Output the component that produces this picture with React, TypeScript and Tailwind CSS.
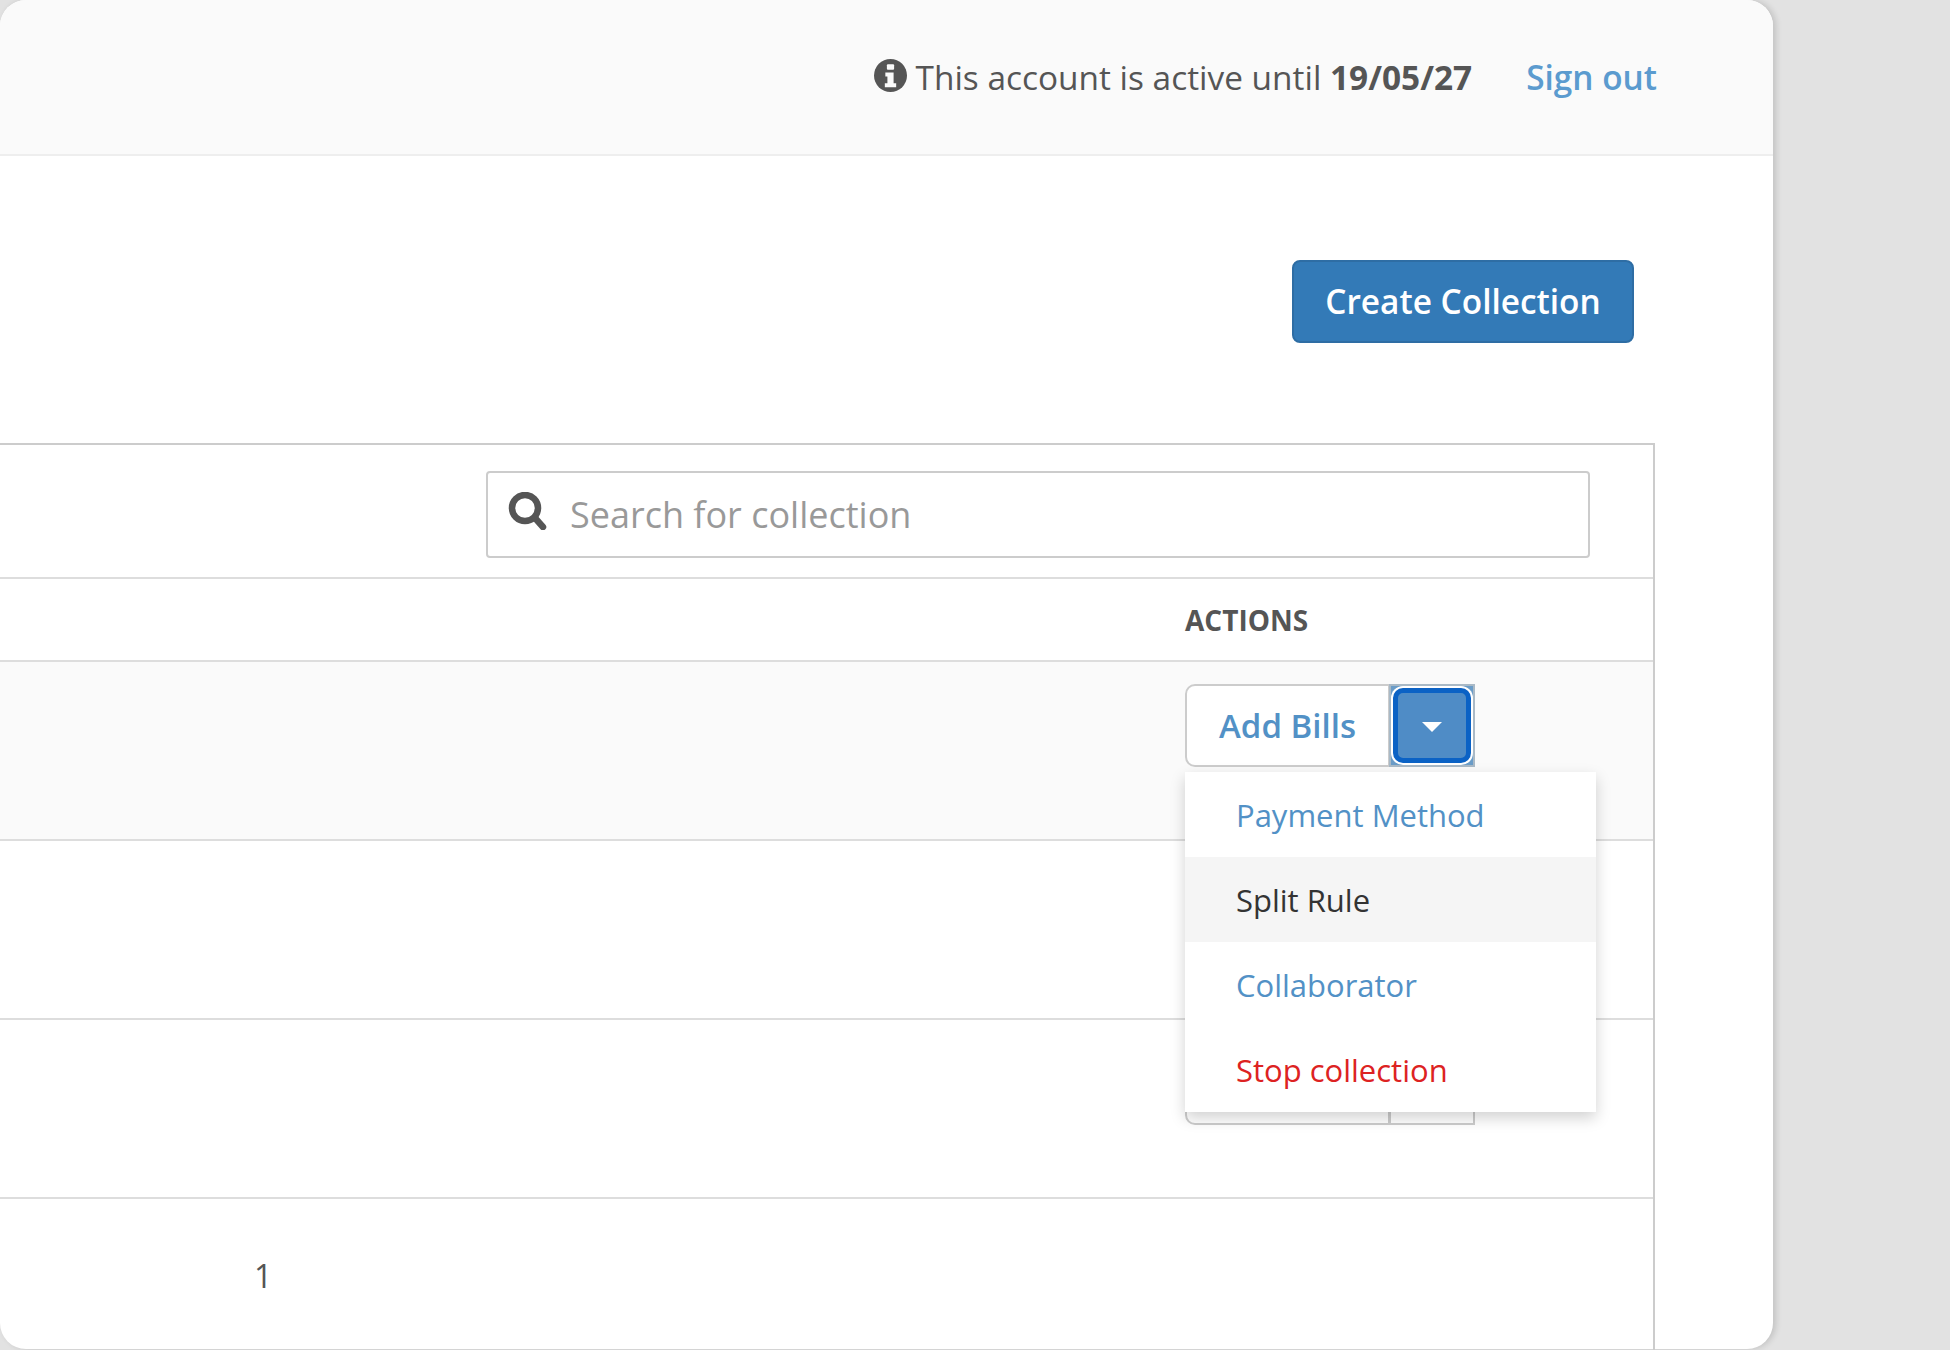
function Caret() {
  return (
    <svg width="20" height="10" viewBox="0 0 20 10" className="block mt-[3px]">
      <path d="M0 0H20L10 10Z" fill="#ffffff" />
    </svg>
  );
}

function InfoIcon() {
  return (
    <svg width="33" height="33" viewBox="0 0 32 32" className="block shrink-0 mr-[9px] -mt-[3px]">
      <circle cx="16" cy="16" r="16" fill="#555555" />
      <rect x="12.5" y="5" width="7" height="5.5" rx="1" fill="#fafafa" />
      <path d="M11 13H19V23.5H21.5V27.5H10.5V23.5H13V17H11Z" fill="#fafafa" />
    </svg>
  );
}

function SearchIcon() {
  return (
    <svg width="40" height="38" viewBox="0 0 40 38" className="block shrink-0 -mt-[7px]">
      <circle cx="17" cy="16" r="13" fill="none" stroke="#555555" strokeWidth="6.5" />
      <path d="M27 26L35 35" fill="none" stroke="#555555" strokeWidth="6.5" strokeLinecap="round" />
    </svg>
  );
}

function ButtonGroup({ focused, label }: { focused?: boolean; label?: string }) {
  return (
    <div className="flex w-[291px] h-[83px]">
      <div className="w-[205px] h-full flex items-center justify-center bg-white border-2 border-[#cccccc] rounded-l-[10px] text-[#5291c6] text-[33px] font-semibold">
        {label}
      </div>
      {focused ? (
        <div className="w-[86px] h-full -ml-[1px] bg-[#6a9cc8] border-2 border-[#a9b9c6] p-[2px]">
          <div className="w-full h-full flex items-center justify-center rounded-[10px] bg-[#4f8cc6] border-[5px] border-[#0b62c5] ring-2 ring-white">
            <Caret />
          </div>
        </div>
      ) : (
        <div className="w-[86px] h-full -ml-[1px] bg-white border-2 border-[#cccccc]" />
      )}
    </div>
  );
}

function Row({ children, shaded }: { children: React.ReactNode; shaded?: boolean }) {
  return (
    <div className={`flex justify-end pt-[22px] h-[179px] border-t-2 border-[#dddddd] ${shaded ? "bg-[#fafafa]" : "bg-white"}`}>
      <div className="w-[468px]">{children}</div>
    </div>
  );
}

export default function App() {
  const itemBase = "h-[85px] flex items-center pl-[51px] pt-[2px] text-[31px]";
  return (
    <div
      className="w-[1950px] h-[1350px] overflow-hidden bg-[#e2e2e2]"
      style={{ fontFamily: '"Open Sans", sans-serif' }}
    >
      <div className="w-[1773px] h-[1349px] bg-white rounded-[26px] shadow-[3px_0_6px_rgba(0,0,0,0.14)]">
        <div className="h-[156px] bg-[#fafafa] rounded-t-[26px] border-b-2 border-[#eeeeee] flex items-center justify-end pr-[116px] text-[33.4px] text-[#555555]">
          <InfoIcon />
          <span className="pt-[1px]">
            This account is active until <b className="font-bold">19/05/27</b>
          </span>
          <span className="ml-[54px] pt-[1px] font-semibold text-[#5b9bcf]">Sign out</span>
        </div>

        <div className="flex justify-end pt-[104px] pb-[100px] pr-[139px]">
          <div className="w-[342px] h-[83px] flex items-center justify-center bg-[#337ab7] border-2 border-[#2e6da4] rounded-[8px] text-white text-[33.4px] font-semibold">
            Create Collection
          </div>
        </div>

        <div className="w-[1655px] h-[907px] border-t-2 border-r-2 border-[#cccccc]">
          <div className="h-[132px] flex justify-end items-start pt-[26px] pr-[63px]">
            <div className="w-[1104px] h-[87px] flex items-center pl-[20px] gap-[22px] bg-white border-2 border-[#cccccc] rounded-[4px] text-[36px] text-[#999999]">
              <SearchIcon />
              <span>Search for collection</span>
            </div>
          </div>

          <div className="h-[83px] flex items-center justify-end border-t-2 border-[#dddddd]">
            <div className="w-[468px] text-[28px] font-bold text-[#555555]">ACTIONS</div>
          </div>

          <Row shaded>
            <div className="relative w-[291px]">
              <ButtonGroup focused label="Add Bills" />
              <div className="absolute left-0 top-[88px] w-[411px] bg-white shadow-[0_6px_14px_rgba(0,0,0,0.18)] z-10">
                <div className={`${itemBase} text-[#5291c6]`}>Payment Method</div>
                <div className={`${itemBase} text-[#333333] bg-[#f5f5f5]`}>Split Rule</div>
                <div className={`${itemBase} text-[#5291c6]`}>Collaborator</div>
                <div className={`${itemBase} text-[#dd2222]`}>Stop collection</div>
              </div>
            </div>
          </Row>
          <Row>
            <ButtonGroup />
          </Row>
          <Row>
            <ButtonGroup />
          </Row>

          <div className="h-[150px] border-t-2 border-[#dddddd] pl-[254px] pt-[53px] text-[32px] text-[#555555]">1</div>
        </div>
      </div>
    </div>
  );
}
